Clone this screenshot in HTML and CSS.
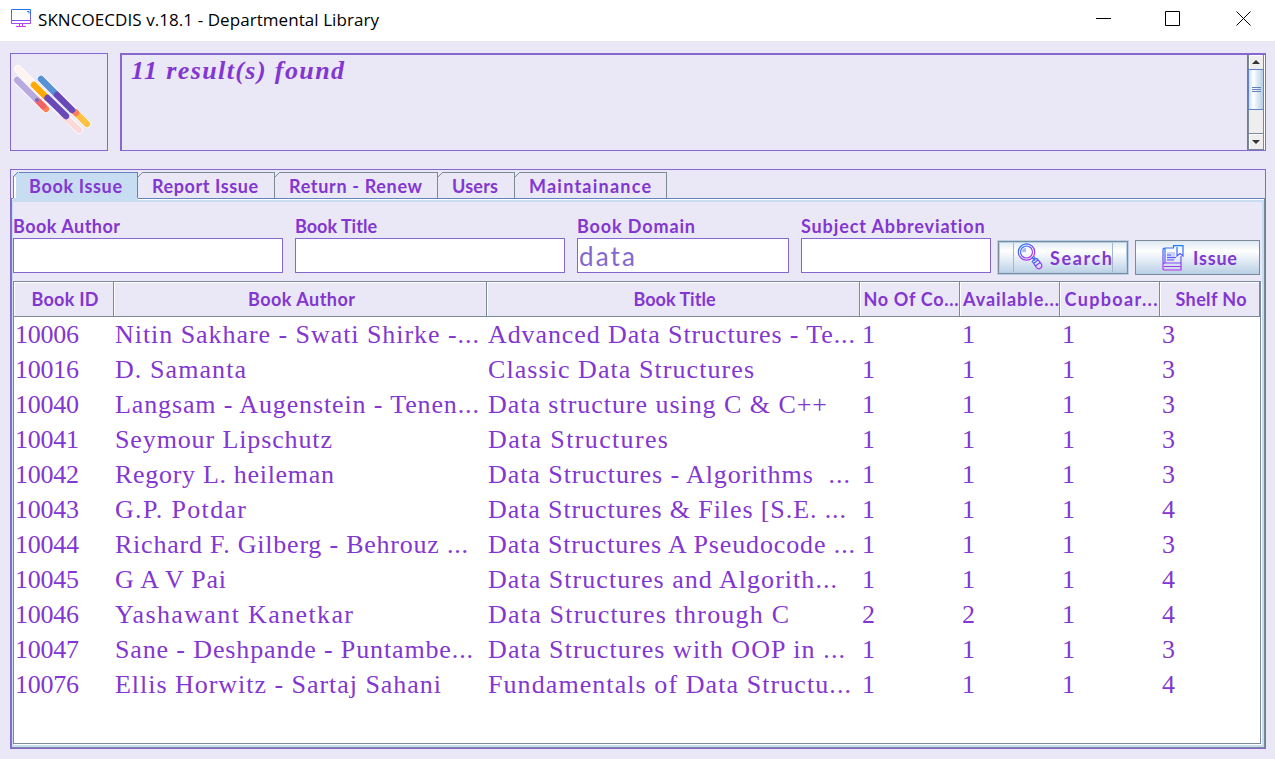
FILE: index.html
```html
<!DOCTYPE html>
<html lang="en">
<head>
<meta charset="utf-8">
<title>SKNCOECDIS v.18.1 - Departmental Library</title>
<link rel="stylesheet" href="styles.css">
</head>
<body>
<header class="titlebar">
  <svg class="app-icon" width="20" height="19" viewBox="0 0 20 19" fill="none">
    <defs><linearGradient id="mon" x1="0" y1="0" x2="0" y2="1"><stop stop-color="#1f72f2"/><stop offset=".6" stop-color="#7d55f5"/><stop offset="1" stop-color="#d43cf0"/></linearGradient></defs>
    <path d="M.5 .5h19v14h-19zM.5 11.5h19M8.5 14.5v3M11.500 14.500v3M5 17.500h10M16 2.500h2v2" stroke="url(#mon)"/>
  </svg>
  <span class="window-title"><span data-w="341">SKNCOECDIS v.18.1 - Departmental Library</span></span>
  <svg class="window-controls" width="156" height="16" viewBox="0 0 156 16" fill="none" stroke="#000">
    <path d="M0 8.500h15M69.500 1.500h14v14h-14zM140.500 1.500l14 14M154.500 1.500l-14 14"/>
  </svg>
</header>
<main class="window">
  <section class="status">
    <div class="logo">
      <svg width="96" height="96" viewBox="0 0 96 96" fill="none" stroke-linecap="round">
        <g stroke="#fff" stroke-width="8"><path d="M8 15L69 76M7 26L36 55M31 25L77 70"/></g>
        <g stroke-width="6.500">
          <path d="M8 15L24 31" stroke="#fff3ef"/><path d="M53 61L69 76" stroke="#fcdad9"/>
          <path d="M24 31L37 44" stroke="#ffaa05"/><path d="M37.500 44L56 62" stroke="#6949b8"/>
          <path d="M34 53L36 55" stroke="#ff8058"/><path d="M27 46L33 52" stroke="#ef6464"/><path d="M7 26L26 45" stroke="#b8a9df"/>
          <path d="M66 59L77 70" stroke="#ffc144"/><path d="M65 58L66 59" stroke="#ff8058"/>
          <path d="M31 25L46 40" stroke="#5891d5"/><path d="M47 41L62 56" stroke="#6949b8"/>
          <path d="M27 46h.01" stroke="#8d5fa8" stroke-width="4"/>
        </g>
      </svg>
    </div>
    <div class="output">
      <div class="message"><span data-w="213">11 result(s) found</span></div>
      <div class="scrollbar">
        <div class="arrow up"><svg width="8" height="4"><path d="M4 0L8 4H0z" fill="#333"/></svg></div>
        <div class="thumb"><i></i><i></i><i></i></div>
        <div class="track"></div>
        <div class="arrow down"><svg width="8" height="4"><path d="M0 0H8L4 4z" fill="#333"/></svg></div>
      </div>
    </div>
  </section>
  <section class="tabpane">
    <nav class="tabs">
      <div class="tab t1 active"><span data-w="93">Book Issue</span></div>
      <div class="tab t2"><span data-w="106">Report Issue</span></div>
      <div class="tab t3"><span data-w="133">Return - Renew</span></div>
      <div class="tab t4"><span data-w="46">Users</span></div>
      <div class="tab t5"><span data-w="122">Maintainance</span></div>
    </nav>
    <div class="panel">
      <div class="form">
        <div class="field wide"><label><span data-w="107">Book Author</span></label><div class="input"></div></div>
        <div class="field wide"><label><span data-w="82">Book Title</span></label><div class="input"></div></div>
        <div class="field domain"><label><span data-w="118">Book Domain</span></label><div class="input"><span data-w="56">data</span></div></div>
        <div class="field subject"><label><span data-w="184">Subject Abbreviation</span></label><div class="input"></div></div>
        <div class="button search">
          <svg width="26" height="27" viewBox="0 0 26 27" fill="none">
            <defs><linearGradient id="mag" x1="0" y1="0" x2=".7" y2="1"><stop stop-color="#167bff"/><stop offset=".5" stop-color="#6555fa"/><stop offset="1" stop-color="#bb2fea"/></linearGradient></defs>
            <g stroke="url(#mag)" stroke-width="1.200"><circle cx="9.500" cy="9" r="8.200"/><circle cx="9.500" cy="9" r="6"/><path d="M15 14.500l3 3M17 13.500l2 3M15.300 18.300l2.500-3 2.500 .5 4 5q1.500 3-1 4.500-2 1.300-4-1zM16.500 20.500l4.500-3.500M18.500 23l4.500-3.500"/></g>
            <path d="M5 8q1-3 4-3v4H5z" fill="#a9b7fa"/>
          </svg><span data-w="62">Search</span>
        </div>
        <div class="button issue">
          <svg width="22" height="26" viewBox="0 0 22 26" fill="none">
            <defs><linearGradient id="book" x1="0" y1="0" x2="0" y2="1"><stop stop-color="#167bff"/><stop offset=".5" stop-color="#6555fa"/><stop offset="1" stop-color="#bb2fea"/></linearGradient></defs>
            <path d="M5 7h8v8H5z" fill="#c9d2fa"/>
            <path d="M12 3H3Q1 3 1 5v19q0 1 2 1h16V18M1 19q0-1 2-1h16V11M3 3v15M11.500 3V.700H21V11l-3-2.500L15 11V2M5 10h4M5 12.500h9M5 15h7M2 21.500h17" stroke="url(#book)" stroke-width="1.200"/>
          </svg><span data-w="44">Issue</span>
        </div>
      </div>
      <div class="table">
        <div class="row head">
          <div><span data-w="67">Book ID</span></div><div><span data-w="107">Book Author</span></div><div><span data-w="82">Book Title</span></div><div><span data-w="95">No Of Co...</span></div><div><span data-w="96">Available...</span></div><div><span data-w="93">Cupboar...</span></div><div><span data-w="71">Shelf No</span></div>
        </div>
        <div class="row"><div><span data-w="64">10006</span></div><div><span data-w="364">Nitin Sakhare - Swati Shirke -...</span></div><div><span data-w="367">Advanced Data Structures - Te...</span></div><div>1</div><div>1</div><div>1</div><div>3</div></div>
        <div class="row"><div><span data-w="64">10016</span></div><div><span data-w="131">D. Samanta</span></div><div><span data-w="266">Classic Data Structures</span></div><div>1</div><div>1</div><div>1</div><div>3</div></div>
        <div class="row"><div><span data-w="64">10040</span></div><div><span data-w="364">Langsam - Augenstein - Tenen...</span></div><div><span data-w="339">Data structure using C &amp; C++</span></div><div>1</div><div>1</div><div>1</div><div>3</div></div>
        <div class="row"><div><span data-w="64">10041</span></div><div><span data-w="217">Seymour Lipschutz</span></div><div><span data-w="180">Data Structures</span></div><div>1</div><div>1</div><div>1</div><div>3</div></div>
        <div class="row"><div><span data-w="64">10042</span></div><div><span data-w="219">Regory L. heileman</span></div><div><span data-w="362">Data Structures - Algorithms &nbsp;...</span></div><div>1</div><div>1</div><div>1</div><div>3</div></div>
        <div class="row"><div><span data-w="64">10043</span></div><div><span data-w="131">G.P. Potdar</span></div><div><span data-w="358">Data Structures &amp; Files [S.E. ...</span></div><div>1</div><div>1</div><div>1</div><div>4</div></div>
        <div class="row"><div><span data-w="64">10044</span></div><div><span data-w="353">Richard F. Gilberg - Behrouz ...</span></div><div><span data-w="367">Data Structures A Pseudocode ...</span></div><div>1</div><div>1</div><div>1</div><div>3</div></div>
        <div class="row"><div><span data-w="64">10045</span></div><div><span data-w="111">G A V Pai</span></div><div><span data-w="349">Data Structures and Algorith...</span></div><div>1</div><div>1</div><div>1</div><div>4</div></div>
        <div class="row"><div><span data-w="64">10046</span></div><div><span data-w="238">Yashawant Kanetkar</span></div><div><span data-w="301">Data Structures through C</span></div><div>2</div><div>2</div><div>1</div><div>4</div></div>
        <div class="row"><div><span data-w="64">10047</span></div><div><span data-w="358">Sane - Deshpande - Puntambe...</span></div><div><span data-w="357">Data Structures with OOP in ...</span></div><div>1</div><div>1</div><div>1</div><div>3</div></div>
        <div class="row"><div><span data-w="64">10076</span></div><div><span data-w="326">Ellis Horwitz - Sartaj Sahani</span></div><div><span data-w="363">Fundamentals of Data Structu...</span></div><div>1</div><div>1</div><div>1</div><div>4</div></div>
      </div>
    </div>
  </section>
</main>
<script src="fit.js"></script>
</body>
</html>
```

FILE: styles.css
```css
* { box-sizing: border-box; }
body {
  margin: 0;
  width: 1275px;
  height: 759px;
  overflow: hidden;
  display: flex;
  flex-direction: column;
  background: #eae8f6;
  color: #8336d1;
  font-family: Lato, "Open Sans", sans-serif;
  font-size: 18px;
  font-weight: 700;
}
svg { display: block; flex: none; }
[data-w] { display: inline-block; white-space: pre; }

.titlebar {
  height: 41px;
  flex: none;
  display: flex;
  align-items: flex-start;
  background: #fff;
  color: #000;
  padding: 9px 23px 0 11px;
}
.window-title {
  font: 400 17px/21px "Open Sans", sans-serif;
  margin-left: 7px;
  flex: 1;
}
.window-controls { margin-top: 1px; }

.window {
  flex: 1;
  display: flex;
  flex-direction: column;
  gap: 18px;
  padding: 12px 9px 10px 10px;
}
.status { display: flex; gap: 12px; height: 98px; flex: none; }
.logo { width: 98px; border: 1px solid #8468cf; }
.logo svg { margin-left: -1px; }
.output {
  flex: 1;
  display: flex;
  border: solid #8468cf;
  border-width: 2px 1px 1px 2px;
}
.message {
  flex: 1;
  padding-left: 9px;
  font: italic 700 26px/32px "Liberation Serif", serif;
}
.scrollbar {
  width: 18px;
  border-left: 1px solid #8468cf;
  display: flex;
  flex-direction: column;
  padding-right: 1px;
  background: #fff;
}
.arrow {
  border: 1px solid #7a8a99;
  background: #eee;
  box-shadow: inset 1px 1px #fff;
  display: flex;
  align-items: center;
  justify-content: center;
}
.up { height: 14px; border-width: 0 1px 0 1px; }
.down { height: 17px; }
.thumb {
  height: 41px;
  border: 1px solid #6382bf;
  background: linear-gradient(90deg, #c8ddf2, #fff 30%, #b8cfe5);
  display: flex;
  flex-direction: column;
  align-items: center;
  justify-content: center;
  gap: 1px;
}
.thumb i { width: 9px; height: 1px; background: #6382bf; }
.track { flex: 1; background: #eee; border: solid #7a8a99; border-width: 0 1px; }

.tabpane {
  flex: 1;
  min-height: 0;
  display: flex;
  flex-direction: column;
  border: 1px solid #8468cf;
  padding-top: 2px;
}
.tabs { display: flex; height: 26px; flex: none; padding-left: 2px; }
.tab {
  --line: #7a8a99;
  --fill: transparent;
  padding-left: 15px;
  line-height: 29px;
  white-space: nowrap;
  background:
    linear-gradient(135deg, transparent 3.200px, var(--line) 3.200px 4.200px, var(--fill) 4.200px) 0 0 / 6px 6px no-repeat,
    linear-gradient(var(--line), var(--line)) 5px 0 / 100% 1px no-repeat,
    linear-gradient(var(--line), var(--line)) 100% 0 / 1px 100% no-repeat,
    linear-gradient(var(--fill), var(--fill)) 6px 0 / 100% 100% no-repeat,
    linear-gradient(var(--fill), var(--fill)) 0 6px / 6px 100% no-repeat;
}
.active {
  --line: #6382bf;
  --fill: #c8ddf2;
  box-shadow: 0 3px #c8ddf2;
  position: relative;
}
.active::before {
  content: "";
  position: absolute;
  left: 0;
  top: 5px;
  bottom: 0;
  width: 2px;
  background: #fff;
  border-left: 1px solid #6382bf;
}
.t1 { width: 125px; padding-left: 16px; }
.t2 { width: 137px; padding-left: 14px; }
.t3 { width: 163px; padding-left: 14px; }
.t4 { width: 77px; padding-left: 14px; }
.t5 { width: 152px; padding-left: 14px; }

.panel {
  flex: 1;
  display: flex;
  flex-direction: column;
  min-height: 0;
  border: 1px solid #6382bf;
  border-right-color: #7a8a99;
  border-bottom-color: #7a8a99;
  box-shadow: inset 0 1px #fff, inset 0 3px #c8ddf2, inset -2px -2px #c8ddf2, inset 1px 0 #c8ddf2;
  padding: 17px 2px 3px 1px;
}
.form { display: flex; align-items: flex-end; height: 59px; flex: none; }
.field { margin-right: 12px; align-self: flex-start; }
.field label { display: block; height: 22px; line-height: 20px; }
.wide { width: 270px; }
.domain { width: 212px; }
.subject { width: 190px; margin-right: 6px; }
.input {
  height: 35px;
  background: #fff;
  border: 1px solid #8468cf;
  padding-left: 1px;
  color: #8468cf;
  font-weight: 400;
  font-size: 26px;
  line-height: 34px;
}
.button {
  height: 35px;
  border: 1px solid #7a8a99;
  background: linear-gradient(#dde8f3, #fff 30%, #b8cfe5);
  display: flex;
  align-items: center;
  line-height: 33px;
}
.button span { padding-top: 2px; }
.search {
  width: 132px;
  margin-right: 6px;
  padding-left: 17px;
  border: 1px solid #b8cfe5;
  box-shadow: inset 0 0 0 1px #7a8a99, inset 0 0 0 2px #b8cfe5;
  background:
    linear-gradient(#a3b8cc, #a3b8cc) 15px 2px / 1px 29px no-repeat,
    linear-gradient(#a3b8cc, #a3b8cc) 114px 2px / 1px 29px no-repeat,
    linear-gradient(#dde8f3, #fff 30%, #b8cfe5);
}
.search svg { margin: -2px 7px 0 2px; }
.issue { width: 125px; padding-left: 26px; }
.issue svg { margin-right: 9px; }

.table {
  flex: 1;
  margin-top: 6px;
  border: 1px solid #7a8a99;
  border-top: 0;
  width: 1248px;
  background: #fff;
  box-shadow: 1px 1px #fff;
}
.row {
  display: grid;
  grid-template-columns: 100px 373px 373px 100px 100px 100px 100px;
  height: 35px;
  font: 400 26px/35px "Liberation Serif", serif;
}
.row > div { padding-left: 1px; white-space: nowrap; overflow: hidden; }
.row > div:nth-child(n+4) { padding-left: 2px; }
.head {
  height: 36px;
  font: 700 18px/36px Lato, "Open Sans", sans-serif;
  background: #eae8f6;
}
.head > div, .head > div:nth-child(n+4) {
  padding: 0 0 0 3px;
  line-height: 35px;
  text-align: center;
  border: solid #7a8a99;
  border-width: 1px 1px 1px 0;
  box-shadow: inset 1px 1px #fff;
}
```

FILE: fit.js
```js
// Tracks each label out to the width given in its data-w attribute.
document.querySelectorAll('[data-w]').forEach(function (el) {
  var target = Number(el.dataset.w);
  var natural = el.getBoundingClientRect().width;
  el.style.letterSpacing = (target - natural) / (el.textContent.length - 1) + 'px';
  el.style.width = target + 'px';
});
```
